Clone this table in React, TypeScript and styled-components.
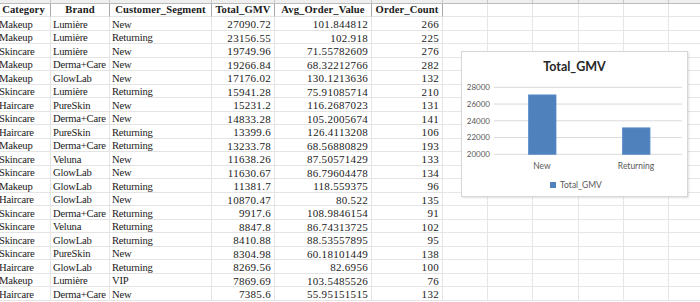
import React from "react";
import styled, { createGlobalStyle } from "styled-components";

const GlobalStyle = createGlobalStyle`
  html, body { margin: 0; padding: 0; background: #ffffff; }
  body { overflow: hidden; }
`;

type Row = [string, string, string, string, string, string];

const rows: Row[] = [
  ["Makeup", "Lumière", "New", "27090.72", "101.844812", "266"],
  ["Makeup", "Lumière", "Returning", "23156.55", "102.918", "225"],
  ["Skincare", "Lumière", "New", "19749.96", "71.55782609", "276"],
  ["Makeup", "Derma+Care", "New", "19266.84", "68.32212766", "282"],
  ["Makeup", "GlowLab", "New", "17176.02", "130.1213636", "132"],
  ["Skincare", "Lumière", "Returning", "15941.28", "75.91085714", "210"],
  ["Haircare", "PureSkin", "New", "15231.2", "116.2687023", "131"],
  ["Skincare", "Derma+Care", "New", "14833.28", "105.2005674", "141"],
  ["Haircare", "PureSkin", "Returning", "13399.6", "126.4113208", "106"],
  ["Makeup", "Derma+Care", "Returning", "13233.78", "68.56880829", "193"],
  ["Skincare", "Veluna", "New", "11638.26", "87.50571429", "133"],
  ["Skincare", "GlowLab", "New", "11630.67", "86.79604478", "134"],
  ["Makeup", "GlowLab", "Returning", "11381.7", "118.559375", "96"],
  ["Haircare", "GlowLab", "New", "10870.47", "80.522", "135"],
  ["Skincare", "Derma+Care", "Returning", "9917.6", "108.9846154", "91"],
  ["Skincare", "Veluna", "Returning", "8847.8", "86.74313725", "102"],
  ["Skincare", "GlowLab", "Returning", "8410.88", "88.53557895", "95"],
  ["Skincare", "PureSkin", "New", "8304.98", "60.18101449", "138"],
  ["Haircare", "GlowLab", "Returning", "8269.56", "82.6956", "100"],
  ["Makeup", "Lumière", "VIP", "7869.69", "103.5485526", "76"],
  ["Haircare", "Derma+Care", "New", "7385.6", "55.95151515", "132"],
];

const headers = ["Category", "Brand", "Customer_Segment", "Total_GMV", "Avg_Order_Value", "Order_Count"];
const numericCols = [false, false, false, true, true, true];
const COLS = "54px 59px 102px 63px 97px 71px 45px 45px 46px 45px 45px 45px";
const EMPTY_COLS = 6;

const Sheet = styled.div`
  position: relative;
  width: 700px;
  height: 302px;
  overflow: hidden;
  background: #ffffff;
`;

const Canvas = styled.div`
  margin-left: -3px;
  display: flex;
  flex-direction: column;
`;

const HeadStrip = styled.div`
  display: grid;
  grid-template-columns: ${COLS};
  height: 4px;
`;

const HeadStripCell = styled.div`
  box-sizing: border-box;
  background: #efefef;
  border-right: 1px solid #c9c9c9;
  border-bottom: 1px solid #bcbcbc;
`;

const Grid = styled.div`
  display: grid;
  grid-template-columns: ${COLS};
  grid-template-rows: 13px repeat(21, 13.5px);
  font-family: "Liberation Serif", "Times New Roman", serif;
  color: #1a1a1a;
`;

const Cell = styled.div<{ $right?: boolean }>`
  box-sizing: border-box;
  display: flex;
  align-items: center;
  justify-content: ${(p) => (p.$right ? "flex-end" : "flex-start")};
  padding: 2px ${(p) => (p.$right ? "3px" : "0")} 0 ${(p) => (p.$right ? "0" : "2px")};
  font-size: ${(p) => (p.$right ? "11px" : "10.6px")};
  letter-spacing: ${(p) => (p.$right ? "0.3px" : "-0.2px")};
  border-right: 1px solid #e4e4e4;
  border-bottom: 1px solid #e4e4e4;
  white-space: nowrap;
`;

const HeaderCell = styled.div`
  box-sizing: border-box;
  display: flex;
  align-items: center;
  justify-content: center;
  padding-top: 0;
  font-size: 10.6px;
  font-weight: bold;
  letter-spacing: 0.1px;
  line-height: 12px;
  border-right: 1px solid #a9a9a9;
  border-bottom: 1px solid #e4e4e4;
  white-space: nowrap;
`;

const BlankCell = styled.div`
  box-sizing: border-box;
  border-right: 1px solid #e6e6e6;
  border-bottom: 1px solid #e6e6e6;
`;

const ChartBox = styled.div`
  position: absolute;
  left: 461px;
  top: 51px;
  width: 227px;
  height: 146px;
  box-sizing: border-box;
  background: #ffffff;
  border: 1px solid #d6d6d6;
  box-shadow: 1px 1px 2px rgba(0, 0, 0, 0.12);
  display: flex;
  flex-direction: column;
  font-family: Lato, "Open Sans", "Liberation Sans", sans-serif;
`;

const ChartTitle = styled.div`
  height: 29px;
  line-height: 29px;
  text-align: center;
  font-size: 12.5px;
  font-weight: bold;
  color: #262626;
`;

const Plot = styled.svg`
  display: block;
  width: 225px;
  height: 92px;
`;

const Legend = styled.div`
  flex: 1;
  display: flex;
  align-items: center;
  justify-content: center;
  gap: 4px;
  padding-left: 3px;
  font-size: 8.5px;
  color: #595959;
`;

const LegendSwatch = styled.span`
  width: 6px;
  height: 6px;
  background: #4f81bd;
`;

const ticks = [28000, 26000, 24000, 22000, 20000];
const yOf = (v: number) => 73.3 - ((v - 20000) / 2000) * 16.75;

const bars = [
  { label: "New", value: 27090.72, cx: 80 },
  { label: "Returning", value: 23156.55, cx: 174 },
];

function Chart() {
  return (
    <ChartBox>
      <ChartTitle>Total_GMV</ChartTitle>
      <Plot viewBox="0 0 225 92">
        {ticks.map((t) => (
          <g key={t}>
            <line x1={32} x2={220} y1={yOf(t)} y2={yOf(t)} stroke="#d9d9d9" strokeWidth={1} />
            <text x={28} y={yOf(t) + 2.8} textAnchor="end" fontSize={8} fill="#595959">
              {t}
            </text>
          </g>
        ))}
        {bars.map((b) => (
          <g key={b.label}>
            <rect
              x={b.cx - 13.5}
              y={yOf(b.value)}
              width={27.5}
              height={yOf(20000) - yOf(b.value)}
              fill="#4f81bd"
              stroke="#5b8ccb"
              strokeWidth={0.8}
            />
            <text x={b.cx} y={87.5} textAnchor="middle" fontSize={8.5} fill="#595959">
              {b.label}
            </text>
          </g>
        ))}
      </Plot>
      <Legend>
        <LegendSwatch />
        <span>Total_GMV</span>
      </Legend>
    </ChartBox>
  );
}

export default function App() {
  return (
    <>
      <GlobalStyle />
      <Sheet>
        <Canvas>
          <HeadStrip>
            {Array.from({ length: 12 }).map((_, i) => (
              <HeadStripCell key={i} />
            ))}
          </HeadStrip>
          <Grid>
            {headers.map((h) => (
              <HeaderCell key={h}>{h}</HeaderCell>
            ))}
            {Array.from({ length: EMPTY_COLS }).map((_, i) => (
              <BlankCell key={`hb${i}`} />
            ))}
            {rows.map((r, ri) => (
              <React.Fragment key={ri}>
                {r.map((v, ci) => (
                  <Cell key={ci} $right={numericCols[ci]}>
                    {v}
                  </Cell>
                ))}
                {Array.from({ length: EMPTY_COLS }).map((_, i) => (
                  <BlankCell key={`b${i}`} />
                ))}
              </React.Fragment>
            ))}
          </Grid>
        </Canvas>
        <Chart />
      </Sheet>
    </>
  );
}
